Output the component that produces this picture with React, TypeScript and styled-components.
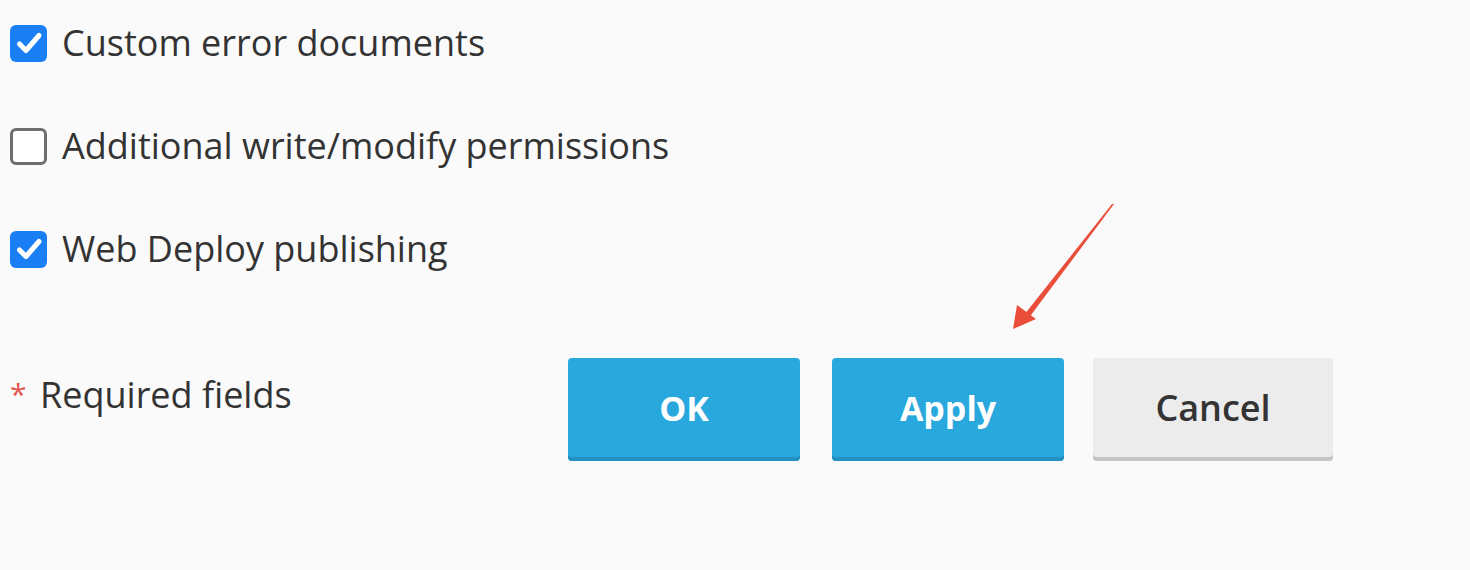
import React, { useState } from 'react';
import styled, { createGlobalStyle } from 'styled-components';

const GlobalStyle = createGlobalStyle`
  html, body {
    margin: 0;
    padding: 0;
    background: #fafafa;
  }
  body {
    font-family: 'Open Sans', 'Noto Sans', sans-serif;
    color: #333;
  }
`;

interface Option {
  label: string;
  checked: boolean;
}

const initialOptions: Option[] = [
  { label: 'Custom error documents', checked: true },
  { label: 'Additional write/modify permissions', checked: false },
  { label: 'Web Deploy publishing', checked: true },
];

export default function App() {
  const [options, setOptions] = useState<Option[]>(initialOptions);

  const toggle = (i: number) =>
    setOptions(options.map((o, j) => (j === i ? { ...o, checked: !o.checked } : o)));

  return (
    <Page>
      <GlobalStyle />
      <List>
        {options.map((o, i) => (
          <Row key={o.label} onClick={() => toggle(i)}>
            <Box $checked={o.checked}>
              {o.checked && (
                <svg width="36" height="36" viewBox="0 0 36 36">
                  <path d="M8.5 19 L15 25.5 L28 10.5" fill="none" stroke="#fff" strokeWidth="5" strokeLinecap="round" strokeLinejoin="round" />
                </svg>
              )}
            </Box>
            <Label>{o.label}</Label>
          </Row>
        ))}
      </List>
      <Footer>
        <Required>
          <Star>*</Star>Required fields
        </Required>
        <Buttons>
          <Button type="button">OK</Button>
          <Button type="button">Apply</Button>
          <CancelButton type="button">Cancel</CancelButton>
        </Buttons>
      </Footer>
      <Arrow width="130" height="140" viewBox="0 0 130 140">
        <polygon points="114,4 112,4 24,115 28,119" fill="#e94e3b" />
        <polygon points="13,129 17,105 36,119" fill="#e94e3b" />
      </Arrow>
    </Page>
  );
}

const Page = styled.div`
  position: relative;
  width: 1470px;
  height: 570px;
  overflow: hidden;
  padding: 25px 0 0 10px;
  box-sizing: border-box;
`;

const List = styled.div`
  display: flex;
  flex-direction: column;
  gap: 67px;
`;

const Row = styled.label`
  display: flex;
  align-items: center;
  gap: 15px;
  height: 36px;
  cursor: pointer;
`;

const Box = styled.span<{ $checked: boolean }>`
  width: 37px;
  height: 37px;
  box-sizing: border-box;
  border-radius: 6px;
  display: flex;
  align-items: center;
  justify-content: center;
  background: ${(p) => (p.$checked ? '#1a7ef5' : '#fff')};
  border: ${(p) => (p.$checked ? 'none' : '3px solid #6e6e6e')};
`;

const Label = styled.span`
  font-size: 36px;
  line-height: 36px;
  color: #333;
`;

const Footer = styled.div`
  display: flex;
  align-items: flex-start;
  margin-top: 91px;
`;

const Required = styled.div`
  width: 558px;
  font-size: 36px;
  line-height: 36px;
  padding-top: 18px;
  color: #333;
`;

const Star = styled.span`
  display: inline-block;
  width: 30px;
  color: #e0554f;
  font-size: 30px;
  vertical-align: 3px;
`;

const Buttons = styled.div`
  display: flex;
  gap: 32px;
`;

const Button = styled.button`
  width: 232px;
  height: 103px;
  border: none;
  border-radius: 4px;
  font-family: 'Open Sans', sans-serif;
  font-size: 34px;
  font-weight: 700;
  background: #29a8de;
  color: #fff;
  box-shadow: inset 0 -4px 0 #2190bf;
  padding: 0 0 4px;
  cursor: pointer;
`;

const CancelButton = styled(Button)`
  width: 240px;
  margin-left: -3px;
  font-size: 36px;
  font-weight: 600;
  background: #ececec;
  color: #333;
  box-shadow: inset 0 -4px 0 #c4c4c4;
`;

const Arrow = styled.svg`
  position: absolute;
  left: 1000px;
  top: 200px;
`;
